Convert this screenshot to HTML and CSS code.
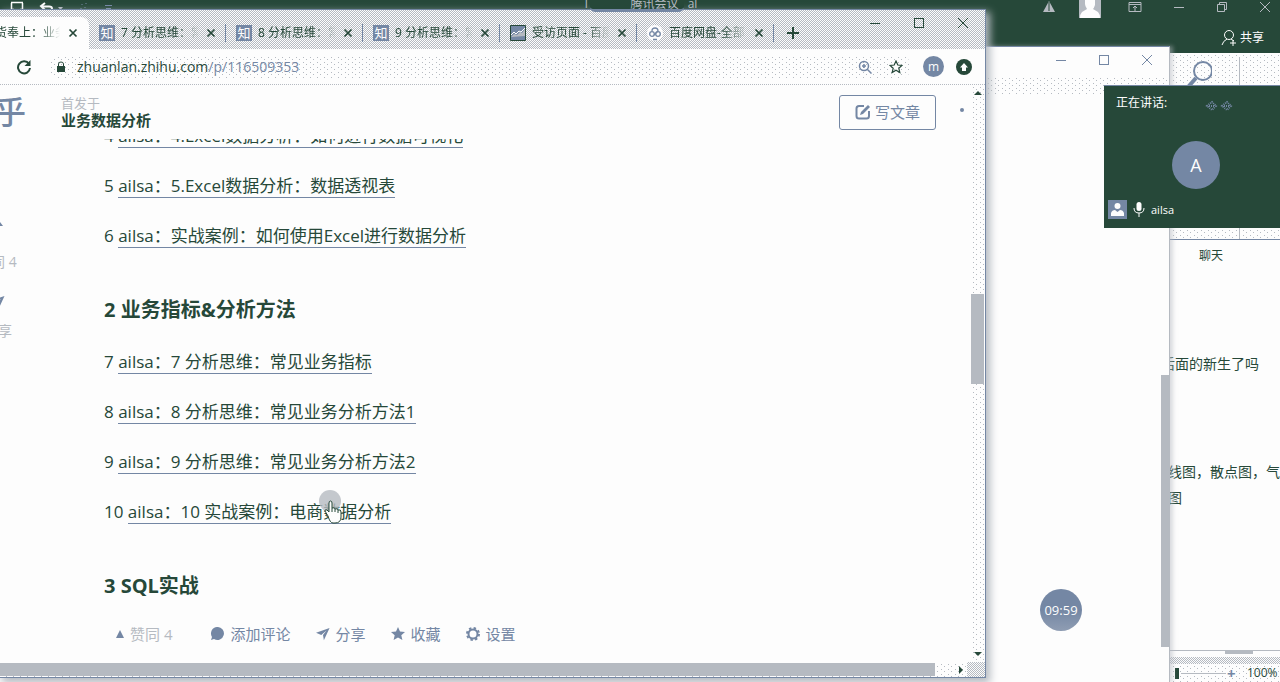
FILE: index.html
```html
<!DOCTYPE html>
<html lang="zh-CN">
<head>
<meta charset="utf-8">
<meta name="viewport" content="width=device-width, initial-scale=1">
<title>业务数据分析</title>
<link rel="stylesheet" href="styles.css">
</head>
<body>
<svg width="0" height="0" class="defs" aria-hidden="true">
  <symbol id="close" viewBox="0 0 12 12"><path d="M2.500 2.500l7 7M9.500 2.500l-7 7" fill="none" stroke="currentColor" stroke-width="1.700"/></symbol>
  <symbol id="win-min" viewBox="0 0 12 12"><path d="M1 6.500h10" stroke="currentColor"/></symbol>
  <symbol id="win-max" viewBox="0 0 12 12"><rect x="1.500" y="1.500" width="9" height="9" fill="none" stroke="currentColor"/></symbol>
  <symbol id="win-close" viewBox="0 0 12 12"><path d="M1 1l10 10M11 1L1 11" fill="none" stroke="currentColor"/></symbol>
  <symbol id="plane" viewBox="0 0 16 16"><path d="M15.500 1L9 15l-1-6 4-5-6 5-6-2.500z" fill="currentColor"/></symbol>
</svg>

<div class="desktop">
  <section class="sheet" aria-label="工作簿">
    <header class="sheet-top">
      <div class="quick">
        <svg width="16" height="12" viewBox="0 0 16 12"><path d="M2.500 3v6.500H5M13.500 3v6.500H11M2 2.500h12" fill="none" stroke="#fdfdfd" stroke-width="1.500"/></svg>
        <svg width="26" height="12" viewBox="0 0 26 12"><path d="M6 3L2 6l4 4M3 6.500h7c4 0 4 4 0 5" fill="none" stroke="#fdfdfd" stroke-width="2"/><path d="M19 7h5l-2.500 3z" fill="#b5bac1"/></svg>
        <svg width="10" height="10" viewBox="0 0 10 10"><path d="M3 4v1M7 3v1M2 8v1M6 7v1" stroke="#7487a4"/></svg>
        <svg width="10" height="10" viewBox="0 0 10 10"><path d="M2 5.500h7M3 8.500h5" stroke="#7487a4"/></svg>
      </div>
      <div class="sheet-right">
        <div class="sheet-controls">
          <svg width="14" height="14" viewBox="0 0 14 14"><path d="M7 1l6 11H1z" fill="#b5bac1"/><path d="M7 2v9" stroke="#264839"/></svg>
          <svg class="user" width="22" height="18" viewBox="0 0 22 18"><path d="M0 0h22v18H0z" fill="#b5bac1"/><path d="M6 0h10v5q-1 3-2 4l5 3q2 2 2 6H1q0-4 2-6l5-3Q6 6 6 4z" fill="#fdfdfd"/></svg>
          <svg width="14" height="14" viewBox="0 0 14 14"><path d="M1 2.500h12v9H1zM1 4.500h12M7 11V6M5 8l2-2 2 2" fill="none" stroke="#b5bac1"/></svg>
          <svg width="12" height="12"><use href="#win-min"/></svg>
          <svg width="12" height="12" viewBox="0 0 12 12"><path d="M1.500 3.500h7v7h-7zM3.500 3V1.500h7v7H9" fill="none" stroke="#b5bac1"/></svg>
          <svg width="12" height="12"><use href="#win-close"/></svg>
        </div>
        <button class="share"><svg width="16" height="18" viewBox="0 0 16 18"><circle cx="8" cy="6" r="4.500"/><path d="M6 10q-4 2-5 6M10 10l3 2M9 14h6M12 11v6"/></svg>共享</button>
      </div>
    </header>
    <div class="chat">
      <div class="ribbon"><svg width="28" height="32" viewBox="0 0 28 32"><circle cx="19" cy="15" r="9" fill="none" stroke="#7487a4" stroke-width="2"/><path d="M12 22L4 31" stroke="#7487a4" stroke-width="4"/></svg></div>
      <h2>聊天</h2>
      <div class="messages">
        <p>后面的新生了吗</p>
        <p>线图，散点图，气泡</p>
        <p>图</p>
      </div>
      <div class="sheet-scroll"><i></i></div>
      <div class="zoombar"><i class="zoom-thumb"></i><i class="zoom-line"></i><b>+</b><span>100%</span></div>
    </div>
  </section>

  <section class="back-window" aria-label="窗口">
    <div class="back-title">
      <svg width="12" height="12"><use href="#win-min"/></svg>
      <svg width="12" height="12"><use href="#win-max"/></svg>
      <svg width="12" height="12"><use href="#win-close"/></svg>
    </div>
    <div class="back-strip"></div>
    <div class="back-body"><i class="back-thumb"></i></div>
    <time class="timer">09:59</time>
  </section>

  <main class="browser">
    <div class="tabs">
      <div class="tab active"><span class="tab-text">货奉上：业务</span><button aria-label="关闭"><svg width="12" height="12"><use href="#close"/></svg></button></div>
      <div class="tab"><i class="zhi">知</i><span class="tab-text">7 分析思维：常见</span><button aria-label="关闭"><svg width="12" height="12"><use href="#close"/></svg></button></div>
      <div class="tab"><i class="zhi">知</i><span class="tab-text">8 分析思维：常见</span><button aria-label="关闭"><svg width="12" height="12"><use href="#close"/></svg></button></div>
      <div class="tab"><i class="zhi">知</i><span class="tab-text">9 分析思维：常见</span><button aria-label="关闭"><svg width="12" height="12"><use href="#close"/></svg></button></div>
      <div class="tab"><svg width="16" height="16" viewBox="0 0 16 16"><path d="M.5.5h15v15H.5z" fill="#7487a4" stroke="#264839"/><path d="M1 12l3-3 3 1 3-3 2 1 3-4v7z" fill="#b5bac1"/><path d="M1 10l3-3 2 2 3-3 2 1 4-4" fill="none" stroke="#fdfdfd"/></svg><span class="tab-text">受访页面 - 百度</span><button aria-label="关闭"><svg width="12" height="12"><use href="#close"/></svg></button></div>
      <div class="tab"><svg width="16" height="16" viewBox="0 0 16 16"><circle cx="8" cy="8" r="8" fill="#fdfdfd"/><g fill="none" stroke="#7487a4" stroke-width="1.300"><circle cx="5" cy="9" r="2.300"/><circle cx="11" cy="9" r="2.300"/><path d="M5 6q0-3 3-3t3 3L7 10M6 14.500h4"/></g></svg><span class="tab-text">百度网盘-全部</span><button aria-label="关闭"><svg width="12" height="12"><use href="#close"/></svg></button></div>
      <button class="new-tab" aria-label="新标签页"><svg width="12" height="12" viewBox="0 0 12 12"><path d="M6 0v12M0 6h12" stroke="#264839" stroke-width="2"/></svg></button>
      <div class="controls">
        <svg width="12" height="12"><use href="#win-min"/></svg>
        <svg width="12" height="12"><use href="#win-max"/></svg>
        <svg width="12" height="12"><use href="#win-close"/></svg>
      </div>
    </div>

    <div class="toolbar">
      <button aria-label="重新加载"><svg width="16" height="16" viewBox="0 0 16 16"><path d="M13 5A6 6 0 1 0 14 9" fill="none" stroke="#264839" stroke-width="2"/><path d="M14.500 1v6h-6z" fill="#264839"/></svg></button>
      <div class="address">
        <svg width="10" height="12" viewBox="0 0 10 12"><path d="M1 5h8v6H1z" fill="#264839"/><path d="M2.500 5V3q0-2 2.500-2t2.500 2v2" fill="none" stroke="#264839"/></svg>
        <div class="url">zhuanlan.zhihu.com<span>/p/116509353</span></div>
        <svg width="14" height="14" viewBox="0 0 14 14"><g fill="none" stroke="#7487a4" stroke-width="1.500"><circle cx="6" cy="6" r="4.500"/><path d="M9 9l4.500 4.500M4 6h4M6 4v4"/></g></svg>
        <svg width="14" height="14" viewBox="0 0 14 14"><path d="M7 1l1.800 4 4.200.4-3.200 2.800 1 4.300L7 10.200l-3.800 2.300 1-4.300L1 5.400 5.200 5z" fill="none" stroke="#264839" stroke-width="1.200"/></svg>
      </div>
      <span class="profile">m</span>
      <svg width="16" height="16" viewBox="0 0 16 16"><circle cx="8" cy="8" r="8" fill="#264839"/><path d="M8 4l4 4.500h-2V12H6V8.500H4z" fill="#fdfdfd"/></svg>
    </div>

    <div class="viewport">
      <div class="page">
        <header class="page-head">
          <span class="logo">乎</span>
          <div class="column-name"><small>首发于</small><a href="#top">业务数据分析</a></div>
          <button class="write"><svg width="16" height="16" viewBox="0 0 16 16"><path d="M9 2H4Q1.500 2 1.500 4.500v7.500q0 2.500 2.500 2.500h7.500q2.500 0 2.500-2.500V7" fill="none" stroke="#7487a4" stroke-width="2"/><path d="M13 1l2 2-7 7-3 1 1-3z" fill="#7487a4"/></svg>写文章</button>
          <i class="more"></i>
        </header>
        <div class="reader">
          <aside class="side">
            <svg width="14" height="10" viewBox="0 0 14 10"><path d="M7 1l6 8H1z" fill="#7487a4"/></svg>
            <span>赞同 4</span>
            <svg width="16" height="16" class="side-plane"><use href="#plane"/></svg>
            <span>分享</span>
          </aside>
          <article class="article">
            <p>4 <a href="#a4">ailsa：4.Excel数据分析：如何进行数据可视化</a></p>
            <p>5 <a href="#a5">ailsa：5.Excel数据分析：数据透视表</a></p>
            <p>6 <a href="#a6">ailsa：实战案例：如何使用Excel进行数据分析</a></p>
            <h2>2 业务指标&amp;分析方法</h2>
            <p>7 <a href="#a7">ailsa：7 分析思维：常见业务指标</a></p>
            <p>8 <a href="#a8">ailsa：8 分析思维：常见业务分析方法1</a></p>
            <p>9 <a href="#a9">ailsa：9 分析思维：常见业务分析方法2</a></p>
            <p>10 <a href="#a10">ailsa：10 实战案例：电商<span class="hover">数<svg class="pointer" width="26" height="34" viewBox="0 0 26 34"><circle cx="11" cy="11" r="11" fill="#b5bac1" opacity=".8"/><path d="M9 26l-3-5q0-2 2-1l2 2V13q0-2 1.500-2t1.500 2v5q3-1 3 1 3-1 3 1 3-1 3 2v5q0 6-6 6h-2q-3 0-5-7z" fill="#fdfdfd" stroke="#264839"/><path d="M13 18v4M16 19v3M19 20v3" stroke="#264839"/></svg></span>据分析</a></p>
            <h2>3 SQL实战</h2>
          </article>
        </div>
        <footer class="actions">
          <button class="vote"><svg width="10" height="10" viewBox="0 0 10 10"><path d="M5 1l4 8H1z" fill="#7487a4"/></svg>赞同 4</button>
          <button><svg width="14" height="14" viewBox="0 0 14 14"><path d="M7 0a6.500 6.500 0 1 1-3 12l-3 1 1-3A6.500 6.500 0 0 1 7 0z" fill="#7487a4"/></svg>添加评论</button>
          <button><svg width="14" height="14"><use href="#plane"/></svg>分享</button>
          <button><svg width="14" height="14" viewBox="0 0 14 14"><path d="M7 0l2 4.500 5 .5-3.700 3.300L11.400 13 7 10.600 2.600 13l1.100-4.700L0 5l5-.5z" fill="#7487a4"/></svg>收藏</button>
          <button><svg width="14" height="14" viewBox="0 0 14 14"><circle cx="7" cy="7" r="4.500" fill="none" stroke="#7487a4" stroke-width="2"/><circle cx="7" cy="7" r="6" fill="none" stroke="#7487a4" stroke-width="2" stroke-dasharray="2.400 2.300"/></svg>设置</button>
        </footer>
      </div>
      <div class="vscroll"><i class="up"></i><i class="vthumb"></i><i class="down"></i></div>
    </div>
    <div class="hscroll"><i class="hthumb"></i><i class="next"></i><i class="corner"></i></div>
  </main>

  <div class="meeting"><span>T</span><strong>腾讯会议</strong><span>al</span></div>

  <aside class="call">
    <div class="call-head"><span>正在讲话:</span><svg width="28" height="12" viewBox="0 0 28 12"><path d="M2 6l5-4 4 4-4 4zM4 6h5M17 6l5-4 4 4-4 4zM19 6h5" fill="none" stroke="#7487a4" stroke-width="2" stroke-dasharray="1 1"/></svg></div>
    <div class="call-avatar">A</div>
    <div class="call-foot">
      <svg width="19" height="19" viewBox="0 0 19 19"><path d="M0 0h19v19H0z" fill="#7487a4"/><circle cx="9.500" cy="6" r="3" fill="#fdfdfd"/><path d="M3 16v-3q1-3 4-3l2.500 2L12 10q3 0 4 3v3z" fill="#fdfdfd"/></svg>
      <svg width="12" height="15" viewBox="0 0 12 15"><rect x="3.500" y="0" width="5" height="9" rx="2.500" fill="#fdfdfd"/><path d="M1 6q0 5 5 5t5-5M6 11v4" fill="none" stroke="#fdfdfd"/></svg>
      <span>ailsa</span>
    </div>
  </aside>
</div>
</body>
</html>
```
FILE: styles.css
```css
:root {
  --ink: #264839;
  --blue: #7487a4;
  --gray: #b5bac1;
  --paper: #fdfdfd;
  --half: repeating-conic-gradient(var(--gray) 0 25%, var(--paper) 0 50%) 0 0 / 2px 2px;
  --dot: radial-gradient(circle, var(--gray) 0 0.7px, transparent 0.8px);
  --dots: var(--dot) 0 0 / 7px 5px, var(--dot) 3px 2px / 7px 5px;
}
* { box-sizing: border-box; }
body {
  margin: 0;
  color: var(--ink);
  font: 12px/16px "Open Sans", "Noto Sans CJK SC", sans-serif;
}
button {
  display: flex;
  align-items: center;
  padding: 0;
  border: 0;
  background: none;
  color: inherit;
  font: inherit;
}
p, h2 { margin: 0; }
a { color: inherit; text-decoration: none; }
svg { display: block; flex: none; }
.defs { position: absolute; }
.desktop { position: relative; height: 100vh; overflow: hidden; background: var(--paper); }

/* spreadsheet at the back */
.sheet { display: flex; flex-direction: column; height: 100%; }
.sheet-top {
  display: flex;
  justify-content: space-between;
  flex: none;
  height: 53px;
  background: var(--ink);
  color: var(--gray);
}
.quick { display: flex; gap: 14px; flex: 1; padding-left: 9px; }
.sheet-right { display: flex; flex: 1; flex-direction: column; align-items: flex-end; gap: 11px; }
.sheet-controls { display: flex; align-items: center; gap: 31px; height: 18px; padding-right: 9px; }
.sheet-controls svg { margin-bottom: 4px; }
.sheet-controls .user { margin: 0 -4px 0 -8px; }
.share { gap: 3px; padding-right: 16px; color: var(--paper); }
.share svg { fill: none; stroke: var(--paper); }
.chat {
  display: flex;
  flex: 1;
  flex-direction: column;
  align-self: flex-end;
  width: 110px;
}
.ribbon {
  height: 187px;
  padding: 3px 0 0 14px;
  border-bottom: 1px solid var(--blue);
  background: linear-gradient(var(--gray), var(--gray)) 69px 4px / 1px 100% no-repeat, var(--dots);
}
.chat h2 { padding: 8px 0 0 29px; font-size: 12px; font-weight: 400; }
.messages { flex: 1; overflow: hidden; padding-top: 87px; font-size: 14px; line-height: 26px; white-space: nowrap; }
.messages p { margin-left: -9px; }
.messages p + p { margin: 82px 0 0 -2px; }
.messages p + p + p { margin-top: 0; }
.sheet-scroll { height: 14px; border-top: 1px solid var(--gray); background: linear-gradient(var(--paper) 6px, transparent 6px), var(--half); }
.sheet-scroll i { display: block; width: 28px; height: 3px; margin-left: 55px; background: var(--gray); }
.zoombar { display: flex; align-items: center; height: 18px; padding-left: 5px; background: var(--dots); }
.zoom-thumb { width: 4px; height: 11px; background: var(--ink); }
.zoom-line { width: 44px; height: 1px; margin: 0 2px; background: var(--gray); }
.zoombar b { width: 20px; color: var(--blue); font-size: 15px; }

/* middle window */
.back-window {
  position: absolute;
  inset: 46px 110px 0 985px;
  display: flex;
  flex-direction: column;
  border-top: 1px solid var(--blue);
  border-right: 1px solid var(--gray);
  background: var(--paper);
  box-shadow: 3px 0 4px rgb(181 186 193 / 50%);
}
.back-title { display: flex; justify-content: flex-end; gap: 31px; height: 29px; padding: 7px 16px 0 0; color: var(--blue); }
.back-strip { height: 18px; background: var(--dots); }
.back-body { display: flex; flex: 1; flex-direction: column; align-items: flex-end; padding: 281px 0 35px; }
.back-thumb { flex: 1; width: 8px; background: var(--gray); }
.timer {
  position: absolute;
  right: 87px;
  bottom: 51px;
  width: 42px;
  border-radius: 50%;
  background: linear-gradient(var(--blue) 50%, #8f9db3);
  color: var(--paper);
  font-size: 13px;
  line-height: 42px;
  text-align: center;
}

/* browser */
.browser {
  position: absolute;
  inset: 9px 294px 4px 0;
  display: flex;
  flex-direction: column;
  border: solid var(--blue);
  border-width: 1px 1px 1px 0;
  background: var(--paper);
  box-shadow: 3px 4px 8px 1px var(--gray);
}
.tabs { display: flex; flex: none; height: 39px; padding-top: 7px; background: var(--half); }
.tab { display: flex; align-items: center; gap: 6px; flex: none; width: 137px; padding-left: 10px; }
.tab:not(.active)::after { content: ""; width: 1px; height: 18px; margin-left: 2px; background: var(--blue); }
.tab.active { width: 89px; padding: 0; border-radius: 0 8px 0 0; background: var(--paper); }
.tab.active .tab-text { width: 65px; margin-left: -5px; }
.tab.active button { margin-left: 1px; }
.tab-text {
  overflow: hidden;
  width: 78px;
  white-space: nowrap;
  mask-image: linear-gradient(90deg, #000 70%, transparent);
}
.zhi { width: 16px; background: var(--blue); color: var(--paper); font-style: normal; font-size: 13px; text-align: center; }
.new-tab { margin-left: 13px; }
.controls { display: flex; gap: 32px; margin-left: auto; padding-right: 16px; }
.toolbar {
  display: flex;
  align-items: center;
  flex: none;
  gap: 12px;
  height: 36px;
  padding: 0 13px 0 16px;
  border-bottom: 1px dotted var(--gray);
}
.address {
  display: flex;
  align-items: center;
  gap: 17px;
  flex: 1;
  height: 24px;
  margin-left: 4px;
  padding: 0 8px;
  border-radius: 12px;
  background: var(--dots);
}
.url { flex: 1; margin-left: -6px; font-size: 14px; }
.url span { color: var(--blue); }
.profile { width: 21px; border-radius: 50%; background: var(--blue); color: var(--paper); line-height: 21px; text-align: center; }

.viewport { display: flex; flex: 1; min-height: 0; }
.page { display: flex; flex: 1; flex-direction: column; min-width: 0; }
.page-head { display: flex; align-items: center; flex: none; height: 54px; }
.logo { flex: none; width: 61px; color: var(--blue); font-size: 32px; font-weight: 500; line-height: 48px; text-indent: -6px; }
.column-name { display: flex; flex: 1; flex-direction: column; line-height: 17px; font-size: 15px; }
.column-name small { color: var(--gray); font-size: 13px; }
.column-name a { font-weight: 700; }
.write {
  gap: 4px;
  width: 97px;
  height: 35px;
  justify-content: center;
  border: 1px solid var(--blue);
  border-radius: 3px;
  color: var(--blue);
  font-size: 15px;
}
.more { width: 4px; height: 4px; margin: 0 6px 4px 24px; border-radius: 50%; background: var(--blue); }
.reader { display: flex; flex: 1; overflow: hidden; }
.side { display: flex; flex: none; flex-direction: column; width: 104px; padding-top: 78px; color: var(--gray); font-size: 14px; line-height: 20px; }
.side svg { margin-left: -10px; }
.side span { margin: 25px 0 0 -23px; }
.side .side-plane { margin: 23px 0 0 -11px; color: var(--blue); }
.side .side-plane + span { margin: 10px 0 0 -16px; }
.article { flex: 1; margin-top: -16px; font-size: 17px; line-height: 26px; }
.article p { margin-bottom: 24px; }
.article a { border-bottom: 1px solid var(--blue); }
.article h2 { margin: 48px 0 26px; font-size: 20px; line-height: 26px; }
.hover { position: relative; }
.pointer { position: absolute; left: -4px; bottom: -1px; }
.actions {
  display: flex;
  align-items: center;
  gap: 25px;
  flex: none;
  height: 56px;
  padding-left: 115px;
  color: var(--blue);
  font-size: 15px;
}
.actions button { gap: 6px; }
.actions .vote { margin-right: 13px; gap: 5px; color: var(--gray); }

.vscroll { display: flex; flex-direction: column; align-items: center; justify-content: space-between; width: 15px; padding: 6px 0; background: var(--dots); }
.vthumb { width: 13px; height: 90px; margin-bottom: 70px; background: var(--gray); }
.up, .down { border: 4px solid transparent; }
.up { border-top: 0; border-bottom-color: var(--ink); }
.down { border-bottom: 0; border-top-color: var(--ink); }
.hscroll { display: flex; align-items: center; flex: none; height: 15px; background: var(--dots); }
.hthumb { flex: 1; height: 13px; background: var(--gray); }
.next { margin: 0 4px 0 24px; border: 4px solid transparent; border-right: 0; border-left-color: var(--ink); }
.corner { width: 18px; height: 15px; background: var(--half); }

/* meeting bar docked at the top edge */
.meeting {
  position: absolute;
  top: 0;
  left: 50%;
  display: flex;
  height: 12px;
  margin-left: -57px;
  color: var(--gray);
  line-height: 8px;
}
.meeting strong {
  padding: 0 5px 0 41px;
  border-bottom: 3px solid var(--blue);
  border-radius: 0 0 5px 5px;
  background: var(--ink);
  font-weight: 400;
}
.meeting span:last-child { margin-left: 4px; }

/* meeting overlay */
.call {
  position: absolute;
  top: 85px;
  right: 0;
  display: flex;
  flex-direction: column;
  align-items: center;
  width: 176px;
  padding: 9px 4px 9px;
  border-top: 1px solid var(--blue);
  background: var(--ink);
  color: var(--paper);
}
.call-head { display: flex; gap: 38px; align-self: stretch; padding-left: 8px; font-size: 12px; }
.call-head svg { margin-top: 5px; }
.call-avatar { width: 48px; margin: 29px 0 11px 8px; border-radius: 50%; background: var(--blue); font-size: 18px; line-height: 48px; text-align: center; }
.call-foot { display: flex; align-items: center; gap: 6px; align-self: stretch; font-size: 11px; }
```
